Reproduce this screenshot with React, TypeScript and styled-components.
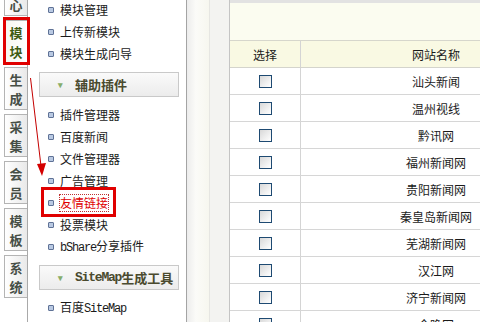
import React from "react";
import styled, { createGlobalStyle } from "styled-components";

const tabs = [
  { label: "核心" },
  { label: "模块", active: true },
  { label: "生成" },
  { label: "采集" },
  { label: "会员" },
  { label: "模板" },
  { label: "系统" },
];

const groups = [
  { title: null, items: ["模块管理", "上传新模块", "模块生成向导"] },
  {
    title: "辅助插件",
    items: ["插件管理器", "百度新闻", "文件管理器", "广告管理", "友情链接", "投票模块", "bShare分享插件"],
  },
  { title: "SiteMap生成工具", items: ["百度SiteMap"] },
];

const sites = [
  "汕头新闻",
  "温州视线",
  "黔讯网",
  "福州新闻网",
  "贵阳新闻网",
  "秦皇岛新闻网",
  "芜湖新闻网",
  "汉江网",
  "济宁新闻网",
  "今晚网",
];

// latin runs get the narrow monospace look of the old bitmap font
const withLatin = (text: string) =>
  text.split(/([A-Za-z]+)/).map((part, idx) =>
    /[A-Za-z]/.test(part) ? <Latin key={idx}>{part}</Latin> : part
  );

const App = () => {
  return (
    <>
      <GlobalStyle />
      <Page>
        <TabStrip>
          <TabList>
            {tabs.map((tab, idx) => (
              <Tab key={idx} $active={tab.active}>
                {tab.label.split("").map((ch, i) => (
                  <span key={i}>{ch}</span>
                ))}
              </Tab>
            ))}
          </TabList>
        </TabStrip>

        <MenuPanel>
          {groups.map((group, gi) => (
            <React.Fragment key={gi}>
              {group.title && (
                <GroupHeader>
                  <Chevron>▾</Chevron>
                  {withLatin(group.title)}
                </GroupHeader>
              )}
              <ItemList $first={gi === 0}>
                {group.items.map((item) => (
                  <MenuItem key={item} $marked={item === "友情链接"}>
                    <Bullet />
                    <ItemText $marked={item === "友情链接"}>{withLatin(item)}</ItemText>
                  </MenuItem>
                ))}
              </ItemList>
            </React.Fragment>
          ))}
        </MenuPanel>

        <Splitter>
          <SplitShade />
          <SplitBar />
        </Splitter>

        <Content>
          <TopBand />
          <Table>
            <HeadRow>
              <CheckCell>选择</CheckCell>
              <NameCell>网站名称</NameCell>
            </HeadRow>
            {sites.map((site) => (
              <Row key={site}>
                <CheckCell>
                  <CheckBox />
                </CheckCell>
                <NameCell>{site}</NameCell>
              </Row>
            ))}
          </Table>
        </Content>

        <Arrow width="480" height="322" viewBox="0 0 480 322">
          <line x1="30.5" y1="78" x2="41" y2="166" stroke="#c40000" strokeWidth="1" />
          <polygon points="37,164 46,163 42,176" fill="#d40000" />
        </Arrow>
      </Page>
    </>
  );
};

export default App;

const GlobalStyle = createGlobalStyle`
  html, body {
    margin: 0;
    padding: 0;
    background: #fff;
  }
  body {
    font-family: "Noto Sans CJK SC", "Liberation Sans", sans-serif;
    font-size: 12px;
    color: #1a1a1a;
  }
`;

const Page = styled.div`
  position: relative;
  display: flex;
  width: 480px;
  height: 322px;
  overflow: hidden;
  background: #fff;
`;

const Latin = styled.span`
  font-family: "Liberation Mono", monospace;
  letter-spacing: -1.2px;
`;

const TabStrip = styled.div`
  width: 28px;
  flex-shrink: 0;
  box-sizing: border-box;
  border-right: 1px solid #a9a9a9;
  padding-left: 4px;
`;

const TabList = styled.div`
  display: flex;
  flex-direction: column;
  gap: 4px;
  margin-top: -27px;
`;

const Tab = styled.div<{ $active?: boolean }>`
  position: relative;
  height: 43px;
  box-sizing: border-box;
  border: 1px solid #b4b4b4;
  border-right: none;
  background: ${(p) =>
    p.$active ? "linear-gradient(to right, #f6f6f0, #ffffff)" : "linear-gradient(to right, #ffffff, #e9e9e9)"};
  display: flex;
  flex-direction: column;
  align-items: center;
  justify-content: center;
  font-size: 13px;
  font-weight: 700;
  line-height: 19px;
  color: ${(p) => (p.$active ? "#3d5a12" : "#464e46")};

  ${(p) =>
    p.$active &&
    `
    &::after {
      content: "";
      position: absolute;
      top: -4px;
      bottom: -3px;
      left: -2px;
      right: -3px;
      border: 3px solid #e00000;
    }
  `}
`;

const MenuPanel = styled.div`
  width: 159px;
  flex-shrink: 0;
  box-sizing: border-box;
  border-right: 1px solid #a4a4a4;
`;

const ItemList = styled.div<{ $first?: boolean }>`
  display: flex;
  flex-direction: column;
  padding-left: 20px;
  margin-top: ${(p) => (p.$first ? "-1px" : "7px")};
`;

const MenuItem = styled.div<{ $marked?: boolean }>`
  position: relative;
  height: 22px;
  display: flex;
  align-items: center;
  gap: 6px;

  ${(p) =>
    p.$marked &&
    `
    &::after {
      content: "";
      position: absolute;
      left: -7px;
      top: -5px;
      width: 75px;
      height: 30px;
      box-sizing: border-box;
      border: 3px solid #e00000;
    }
  `}
`;

const Bullet = styled.span`
  width: 4px;
  height: 4px;
  border: 1px solid #5f7296;
  border-radius: 1px;
  background: #b9c9e2;
  flex-shrink: 0;
`;

const ItemText = styled.span<{ $marked?: boolean }>`
  line-height: 16px;
  white-space: nowrap;
  color: ${(p) => (p.$marked ? "#e00000" : "#1a1a1a")};
  outline: ${(p) => (p.$marked ? "1px dotted #c03030" : "none")};
`;

const GroupHeader = styled.div`
  margin: 7px 0 0 11px;
  width: 140px;
  height: 25px;
  box-sizing: border-box;
  border: 1px solid #c9c9c9;
  background: linear-gradient(to bottom, #fafafa, #ececec);
  display: flex;
  align-items: center;
  padding-left: 18px;
  font-size: 13px;
  font-weight: 700;
  color: #4a4a2e;
  white-space: nowrap;
`;

const Chevron = styled.span`
  font-size: 9px;
  color: #86ad6a;
  width: 17px;
`;

const Splitter = styled.div`
  display: flex;
  flex-shrink: 0;
`;

const SplitShade = styled.div`
  width: 22px;
  background: linear-gradient(to right, #ececec, #fbfbf8 40%, #f7f7ef);
`;

const SplitBar = styled.div`
  width: 21px;
  box-sizing: border-box;
  border-left: 1px solid #e6e6e2;
  border-right: 1px solid #c4c4c4;
  background: #f3f3f1;
`;

const Content = styled.div`
  flex: 1;
  min-width: 0;
  overflow: hidden;
  box-sizing: border-box;
  border-top: 3px solid #e2e2e2;
`;

const TopBand = styled.div`
  height: 37px;
  background: #fbfcf0;
  border-bottom: 1px solid #d6d6cc;
`;

const Table = styled.div`
  width: 341px;
`;

const Row = styled.div`
  display: grid;
  grid-template-columns: 71px 270px;
  height: 27px;
  box-sizing: border-box;
  border-bottom: 1px solid #d6d6d6;
  background: #fff;
`;

const HeadRow = styled(Row)`
  background: #f9f9e3;
  border-bottom-color: #d4d4cc;
`;

const CheckCell = styled.div`
  display: flex;
  align-items: center;
  justify-content: center;
  box-sizing: border-box;
  border-right: 1px solid #d4d4d4;
`;

const NameCell = styled.div`
  display: flex;
  align-items: center;
  justify-content: center;
`;

const CheckBox = styled.span`
  width: 13px;
  height: 13px;
  box-sizing: border-box;
  border: 1px solid #1e4a72;
  background: linear-gradient(135deg, #d8d8d8, #f4f4f4 70%, #ffffff);
`;

const Arrow = styled.svg`
  position: absolute;
  left: 0;
  top: 0;
  pointer-events: none;
`;
